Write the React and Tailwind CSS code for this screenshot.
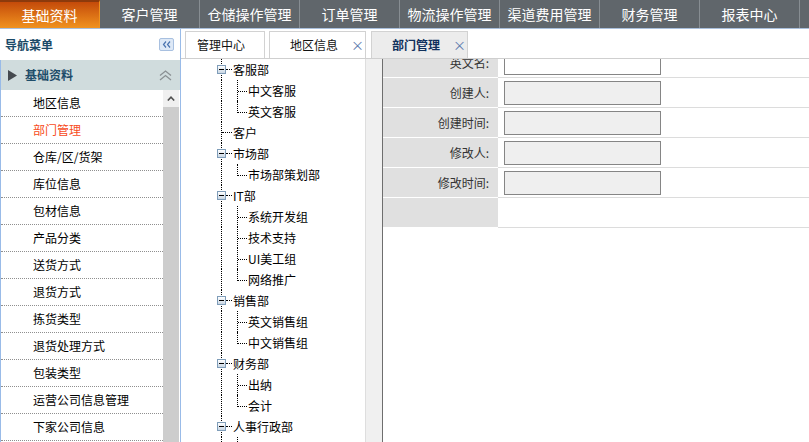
import React from 'react';

const NAV = ['基础资料', '客户管理', '仓储操作管理', '订单管理', '物流操作管理', '渠道费用管理', '财务管理', '报表中心'];

const MENU = ['地区信息', '部门管理', '仓库/区/货架', '库位信息', '包材信息', '产品分类', '送货方式', '退货方式', '拣货类型', '退货处理方式', '包装类型', '运营公司信息管理', '下家公司信息'];

const TREE = [
  { name: '客服部', children: ['中文客服', '英文客服'] },
  { name: '客户' },
  { name: '市场部', children: ['市场部策划部'] },
  { name: 'IT部', children: ['系统开发组', '技术支持', 'UI美工组', '网络推广'] },
  { name: '销售部', children: ['英文销售组', '中文销售组'] },
  { name: '财务部', children: ['出纳', '会计'] },
  { name: '人事行政部', children: ['行政组', '人事组'] },
];

const FIELDS = [
  { label: '英文名:', editable: true },
  { label: '创建人:' },
  { label: '创建时间:' },
  { label: '修改人:' },
  { label: '修改时间:' },
];

// flatten tree into rows so every row is 21px
const rows = [];
TREE.forEach(node => {
  if (node.children) {
    rows.push({ type: 'group', name: node.name });
    node.children.forEach((c, i) => rows.push({ type: 'child', name: c, last: i === node.children.length - 1 }));
  } else {
    rows.push({ type: 'leaf', name: node.name });
  }
});

function TreeRow({ row }) {
  return (
    <div className="relative h-[21px] flex items-center text-[12px] text-black">
      <div className="absolute left-[40px] top-0 bottom-0 border-l border-dotted border-black" />
      {row.type === 'group' && (
        <>
          <div className="absolute left-[36px] top-[6px] w-[9px] h-[9px] border border-[#7f9db9] bg-gradient-to-b from-white to-[#c9d6e3] flex items-center justify-center">
            <div className="w-[5px] h-px bg-black" />
          </div>
          <div className="absolute left-[45px] top-[10px] w-[6px] border-t border-dotted border-black" />
        </>
      )}
      {row.type === 'leaf' && <div className="absolute left-[41px] top-[10px] w-[10px] border-t border-dotted border-black" />}
      {row.type === 'child' && (
        <>
          <div className={`absolute left-[56px] top-0 border-l border-dotted border-black ${row.last ? 'h-[12px]' : 'bottom-0'}`} />
          <div className="absolute left-[57px] top-[11px] w-[9px] border-t border-dotted border-black" />
        </>
      )}
      <span className={row.type === 'child' ? 'pl-[67px]' : 'pl-[52px]'}>{row.name}</span>
    </div>
  );
}

export default function App() {
  return (
    <div className="w-[809px] h-[442px] overflow-hidden bg-white text-[12px]" style={{ fontFamily: '"Noto Sans CJK SC", "Noto Sans", sans-serif' }}>
      {/* top nav */}
      <div className="h-[29px] flex bg-[#60666b] border-b border-[#a9bfdc]">
        {NAV.map((n, i) => (
          <div
            key={n}
            className={`w-[100px] shrink-0 flex items-center justify-center text-[14px] text-white border-r ${
              i === 0 ? 'bg-gradient-to-b from-[#c44a0a] to-[#f0921f] border-t-2 border-t-[#8c3a0c] border-r-[#f0921f]' : 'border-[#878d92]'
            }`}
          >
            {n}
          </div>
        ))}
      </div>

      <div className="flex h-[413px]">
        {/* sidebar */}
        <div className="w-[181px] shrink-0 flex flex-col border-r border-[#99bbe8]">
          <div className="h-[31px] flex items-center justify-between pl-[5px] pr-[6px]">
            <span className="font-bold text-[#1b4a68]">导航菜单</span>
            <div className="w-[15px] h-[13px] rounded-[2px] border border-[#a8c0e0] bg-[#dde8f6] flex items-center justify-center">
              <svg width="9" height="7" viewBox="0 0 9 7" fill="none" stroke="#4b74b0" strokeWidth="1.2">
                <polyline points="4,0.5 1.5,3.5 4,6.5" />
                <polyline points="8,0.5 5.5,3.5 8,6.5" />
              </svg>
            </div>
          </div>
          <div className="h-[30px] flex items-center bg-[#d0dcdd] border-l border-[#99bbe8] pl-[7px] pr-[8px]">
            <svg width="9" height="11" viewBox="0 0 9 11" className="mr-[8px]">
              <polygon points="0,0 9,5.5 0,11" fill="#454a4f" />
            </svg>
            <span className="font-bold text-[#1e4d6a]">基础资料</span>
            <svg width="13" height="11" viewBox="0 0 13 11" fill="none" stroke="#8a9093" strokeWidth="1.3" className="ml-auto">
              <polyline points="1,5.5 6.5,1 12,5.5" />
              <polyline points="1,10 6.5,5.5 12,10" />
            </svg>
          </div>
          <div className="flex-1 flex border-l border-[#99bbe8] overflow-hidden">
            <div className="w-[162px] shrink-0">
              {MENU.map((m, i) => (
                <div key={m} className="h-[27px] flex items-center pl-[32px] border-b border-dotted border-[#8f8f8f]">
                  <span className={i === 1 ? 'text-[#f74c1c]' : 'text-black'}>{m}</span>
                </div>
              ))}
            </div>
            <div className="w-[16px] shrink-0 bg-[#cdcdcd]">
              <div className="h-[17px] bg-[#f0f0f0] flex items-center justify-center">
                <svg width="8" height="5" viewBox="0 0 8 5" fill="none" stroke="#505050" strokeWidth="1.6">
                  <polyline points="0.8,4.5 4,1.2 7.2,4.5" />
                </svg>
              </div>
            </div>
          </div>
        </div>

        {/* main */}
        <div className="flex-1 flex flex-col min-w-0">
          <div className="h-[30px] flex items-end pl-[4px] border-b border-[#cfcfcf]">
            <div className="h-[27px] w-[80px] border border-b-0 border-[#d2d2d2] flex items-center pl-[11px] text-[#111]">管理中心</div>
            <div className="h-[27px] w-[97px] ml-[4px] border border-b-0 border-[#d2d2d2] flex items-center pl-[20px] text-[#111]">
              地区信息
              <span className="ml-[13px] text-[#5a78ac] text-[13px]">×</span>
            </div>
            <div className="h-[27px] w-[97px] ml-[5px] border border-b-0 border-[#d2d2d2] bg-[#ececec] flex items-center pl-[20px] font-bold text-[#10305c]">
              部门管理
              <span className="ml-[13px] text-[#5a78ac] text-[13px] font-normal">×</span>
            </div>
          </div>

          <div className="flex-1 flex overflow-hidden">
            {/* department tree */}
            <div className="w-[184px] shrink-0 overflow-hidden">
              {rows.map((r, i) => <TreeRow key={i} row={r} />)}
            </div>
            <div className="w-[17px] shrink-0 bg-[#f0f0f0] border-l border-[#dedede]" />

            {/* form */}
            <div className="flex-1 border-l border-[#6e6e6e] overflow-hidden">
              <div className="-mt-[11px]">
                {FIELDS.map(f => (
                  <div key={f.label} className="flex h-[30px]">
                    <div className="w-[115px] shrink-0 bg-[#e0e0e0] border-b border-white flex items-center justify-end pr-[9px] text-[#333]">
                      {f.label}
                    </div>
                    <div className="flex-1 border-b border-[#dcdcdc] flex items-center pl-[6px]">
                      <div className={`w-[157px] h-[24px] border border-[#858585] ${f.editable ? 'bg-white' : 'bg-[#efefef]'}`} />
                    </div>
                  </div>
                ))}
                <div className="flex h-[30px]">
                  <div className="w-[115px] shrink-0 bg-[#e0e0e0] border-b border-white" />
                  <div className="flex-1 border-b border-[#dcdcdc]" />
                </div>
              </div>
            </div>
          </div>
        </div>
      </div>
    </div>
  );
}
